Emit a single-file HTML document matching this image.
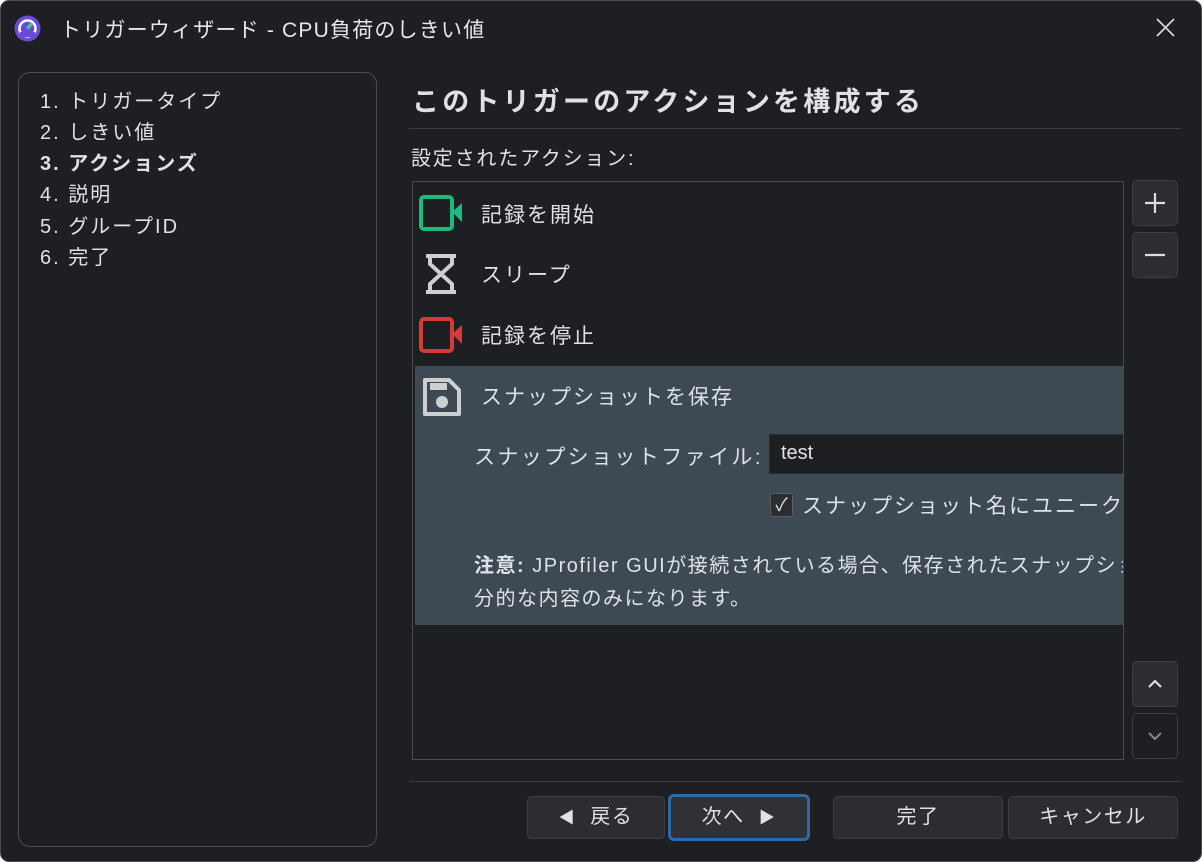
<!DOCTYPE html>
<html><head><meta charset="utf-8"><style>
*{box-sizing:border-box;margin:0;padding:0}
body{width:1202px;height:862px;background:#fff;font-family:"Liberation Sans","Noto Sans CJK JP",sans-serif;color:#dfe1e5;overflow:hidden;position:relative}
.win{position:absolute;left:0;top:0;width:1202px;height:862px;background:#1e1f22;border:1px solid #4a4b4f;border-radius:9px}
.abs{position:absolute;white-space:nowrap}
.left{position:absolute;left:17px;top:71px;width:359px;height:775px;border:1px solid #4b4c50;border-radius:12px}
.left div{position:absolute;left:21px;font-size:20px;letter-spacing:2px}
.sep{position:absolute;height:1px;background:#3c3d41}
.list{position:absolute;left:411px;top:180px;width:712px;height:579px;border:1px solid #4b4c50;background:#1e1f22;overflow:hidden}
.btn{position:absolute;background:#2b2d30;border:1px solid #3d3f43;border-radius:5px;font-size:20px;text-align:center;color:#dfe1e5;letter-spacing:1.5px}
.row{position:absolute;left:0;font-size:21px;letter-spacing:2px}
</style></head><body>
<div class="win">
<svg class="abs" style="left:13px;top:14px" width="27" height="27" viewBox="0 0 27 27"><circle cx="13.5" cy="13.5" r="13" fill="#6a4ad8"/><circle cx="13.5" cy="13.5" r="8" fill="none" stroke="#fff" stroke-width="2.5"/><path d="M13.5 13.5 L18 8" stroke="#3fd08a" stroke-width="3"/><rect x="6" y="17" width="15" height="5" fill="#6a4ad8"/></svg>
<div class="abs" style="left:59px;top:13px;font-size:21px;color:#e6e7ea;letter-spacing:1.2px">トリガーウィザード - CPU負荷のしきい値</div>
<svg class="abs" style="left:1154px;top:16px" width="21" height="21"><path d="M2 2L19 19M19 2L2 19" stroke="#ddd" stroke-width="1.6"/></svg>
<div class="left">
<div style="top:12px">1. トリガータイプ</div>
<div style="top:43px">2. しきい値</div>
<div style="top:74px;font-weight:bold">3. アクションズ</div>
<div style="top:105px">4. 説明</div>
<div style="top:137px">5. グループID</div>
<div style="top:168px">6. 完了</div>
</div>
<div class="abs" style="left:411px;top:79px;font-size:27px;font-weight:bold;letter-spacing:3.2px">このトリガーのアクションを構成する</div>
<div class="sep" style="left:408px;top:127px;width:772px"></div>
<div class="abs" style="left:410px;top:141px;font-size:20px;letter-spacing:1.8px">設定されたアクション:</div>
<div class="list">
<svg class="abs" style="left:6px;top:13px" width="44" height="36"><rect x="2" y="2" width="31" height="32" rx="3" fill="none" stroke="#1fb97e" stroke-width="4"/><path d="M33 17L43 8V27Z" fill="#1fb97e"/></svg>
<div class="abs row" style="left:68px;top:17px">記録を開始</div>
<svg class="abs" style="left:10px;top:71px" width="36" height="42"><path d="M3 3H33M3 39H33M7 3V11L18 21L7 31V39M29 3V11L18 21L29 31V39" fill="none" stroke="#cfcfcf" stroke-width="4"/></svg>
<div class="abs row" style="left:68px;top:77px">スリープ</div>
<svg class="abs" style="left:6px;top:135px" width="44" height="36"><rect x="2" y="2" width="31" height="32" rx="3" fill="none" stroke="#d63a35" stroke-width="4"/><path d="M33 17L43 8V27Z" fill="#d63a35"/></svg>
<div class="abs row" style="left:68px;top:138px">記録を停止</div>
<div class="abs" style="left:2px;top:184px;width:710px;height:259px;background:#3d4a54"></div>
<svg class="abs" style="left:9px;top:195px" width="40" height="40"><path d="M3 3H27L37 13V37H3Z" fill="none" stroke="#cfcfcf" stroke-width="4" stroke-linejoin="round"/><rect x="8" y="6" width="17" height="7" fill="#cfcfcf"/><circle cx="20" cy="25" r="6" fill="#cfcfcf"/></svg>
<div class="abs row" style="left:68px;top:199px">スナップショットを保存</div>
<div class="abs" style="left:61px;top:259px;font-size:21px;letter-spacing:2.4px">スナップショットファイル:</div>
<div class="abs" style="left:356px;top:252px;width:360px;height:40px;background:#1e1f22;border:1px solid #2a2c2f;font-size:20px;padding:7px 11px">test</div>
<div class="abs" style="left:357px;top:311px;width:23px;height:24px;border:1px solid #5a5c60;border-radius:3px;background:#2b2d30;font-size:18px;text-align:center;line-height:22px">✓</div>
<div class="abs" style="left:389px;top:308px;font-size:21px;letter-spacing:2px">スナップショット名にユニークな名前</div>
<div class="abs" style="left:61px;top:367px;font-size:20px;letter-spacing:1.5px"><b>注意:</b> JProfiler GUIが接続されている場合、保存されたスナップショットは</div>
<div class="abs" style="left:61px;top:400px;font-size:20px;letter-spacing:1.5px">分的な内容のみになります。</div>
</div>
<div class="btn" style="left:1131px;top:179px;width:46px;height:46px"><svg width="44" height="44"><path d="M22 12V32M12 22H32" stroke="#ddd" stroke-width="2.2"/></svg></div>
<div class="btn" style="left:1131px;top:231px;width:46px;height:46px"><svg width="44" height="44"><path d="M12 22H32" stroke="#ddd" stroke-width="2.2"/></svg></div>
<div class="btn" style="left:1131px;top:660px;width:46px;height:46px"><svg width="44" height="44"><path d="M16 25L22 19L28 25" fill="none" stroke="#ddd" stroke-width="2.2"/></svg></div>
<div class="btn" style="left:1131px;top:712px;width:46px;height:46px;background:#1e1f22"><svg width="44" height="44"><path d="M16 19L22 25L28 19" fill="none" stroke="#888" stroke-width="2"/></svg></div>
<div class="sep" style="left:408px;top:780px;width:772px"></div>
<div class="btn" style="left:526px;top:795px;width:138px;height:43px;line-height:41px"><span style="font-size:16px">◀</span>&nbsp; 戻る</div>
<div class="btn" style="left:667px;top:793px;width:142px;height:47px;line-height:41px;border:3px solid #2f6aa6;border-radius:6px;background:#2f3134">次へ&nbsp; <span style="font-size:16px">▶</span></div>
<div class="btn" style="left:832px;top:795px;width:170px;height:43px;line-height:41px">完了</div>
<div class="btn" style="left:1007px;top:795px;width:170px;height:43px;line-height:41px">キャンセル</div>
</div>
</body></html>
